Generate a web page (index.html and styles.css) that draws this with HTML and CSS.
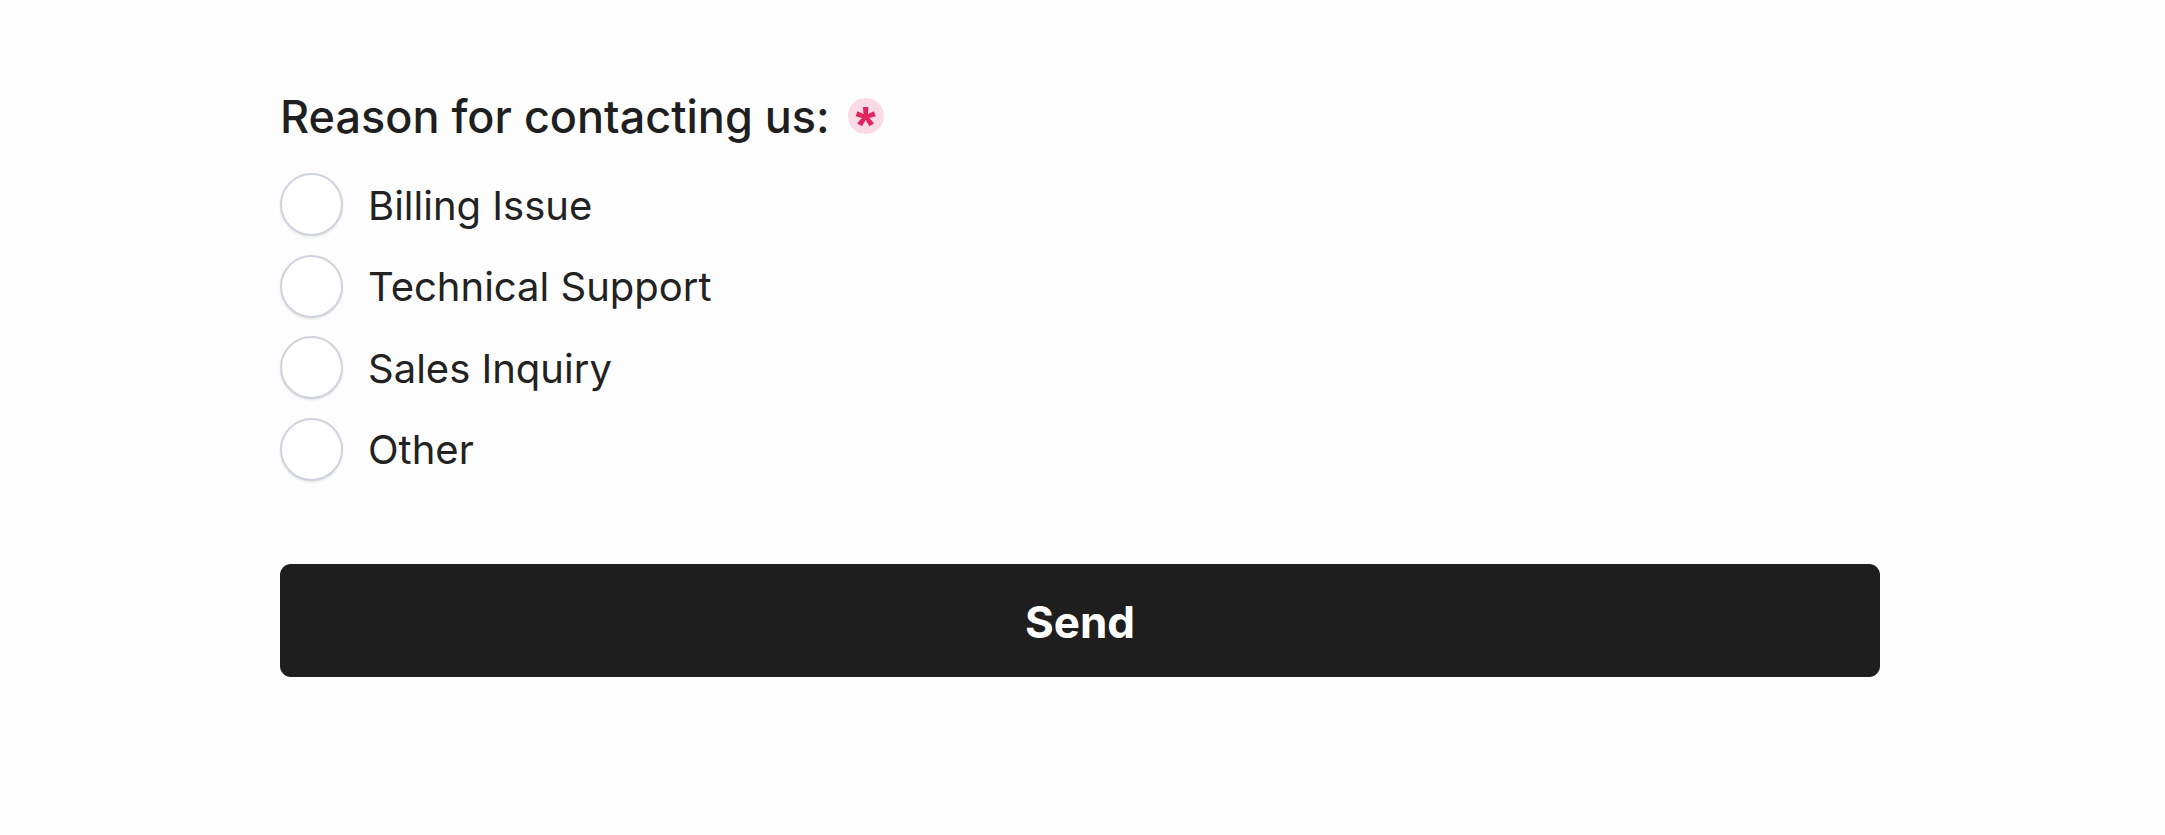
FILE: index.html
```html
<!DOCTYPE html>
<html lang="en">
<head>
<meta charset="utf-8">
<title>Contact</title>
<link rel="stylesheet" href="styles.css">
</head>
<body>
<form class="form">
  <fieldset class="group">
    <legend class="title">
      <span class="title-text">Reason for contacting us:</span>
      <span class="required">*</span>
    </legend>
    <div class="options">
      <label class="option"><input class="radio" type="radio" name="reason"><span class="option-text">Billing Issue</span></label>
      <label class="option"><input class="radio" type="radio" name="reason"><span class="option-text">Technical Support</span></label>
      <label class="option"><input class="radio" type="radio" name="reason"><span class="option-text">Sales Inquiry</span></label>
      <label class="option"><input class="radio" type="radio" name="reason"><span class="option-text">Other</span></label>
    </div>
  </fieldset>
  <button class="send" type="button">Send</button>
</form>
</body>
</html>
```

FILE: styles.css
```css
html, body {
  margin: 0;
  padding: 0;
  background: #fdfdfd;
}

body {
  font-family: Inter, "Noto Sans", "Liberation Sans", sans-serif;
  color: #1f1f1f;
}

.form {
  width: 1600px;
  margin: 0 0 0 280px;
  padding-top: 84px;
  display: flex;
  flex-direction: column;
}

.group {
  border: 0;
  margin: 0;
  padding: 0;
  min-width: 0;
}

.title {
  padding: 0;
  display: flex;
  align-items: center;
  gap: 18px;
  font-size: 45px;
  font-weight: 500;
  line-height: 66px;
  color: #1f1f1f;
}

.required {
  box-sizing: border-box;
  width: 36px;
  height: 36px;
  margin-top: -3px;
  padding-top: 9px;
  border-radius: 50%;
  background: #fadbe5;
  color: #e0245e;
  font-family: "Liberation Sans", Arial, sans-serif;
  font-size: 52px;
  font-weight: 700;
  line-height: 36px;
  text-align: center;
  overflow: visible;
}

.options {
  margin-top: 23px;
  display: flex;
  flex-direction: column;
  gap: 18.6px;
}

.option {
  display: flex;
  align-items: center;
  gap: 25px;
  font-size: 40px;
  line-height: 1.3;
  color: #222222;
}

.option-text {
  padding-top: 2px;
}

.radio {
  appearance: none;
  -webkit-appearance: none;
  margin: 0;
  width: 63px;
  height: 63px;
  border-radius: 50%;
  border: 2px solid #cfd3dd;
  background: #ffffff;
  box-shadow: 0 1.5px 2px rgba(30, 40, 60, 0.10);
  flex: none;
}

.send {
  margin-top: 83px;
  height: 113px;
  width: 100%;
  padding: 3px 0 0;
  border: 0;
  border-radius: 11px;
  background: #1e1e1e;
  color: #ffffff;
  font-family: Inter, "Noto Sans", "Liberation Sans", sans-serif;
  font-size: 44px;
  font-weight: 700;
  cursor: pointer;
}
```
